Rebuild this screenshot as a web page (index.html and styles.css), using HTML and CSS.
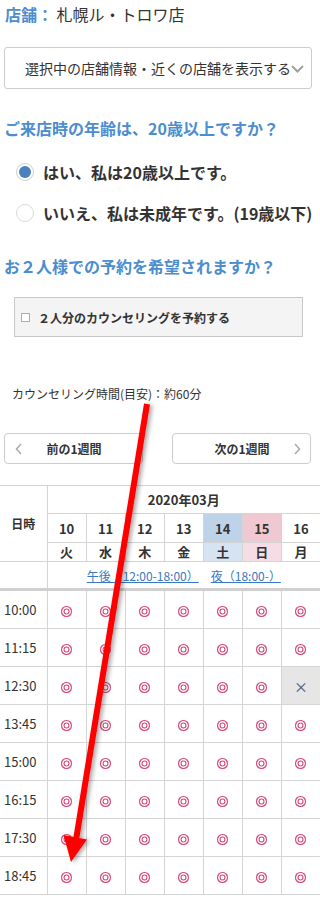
FILE: index.html
```html
<!DOCTYPE html>
<html lang="ja">
<head>
<meta charset="utf-8">
<title>予約</title>
<link rel="stylesheet" href="styles.css">
</head>
<body>
<div class="page">
  <p class="store"><span class="store-label">店舗：</span> 札幌ル・トロワ店</p>
  <div class="select">
    <span class="select-text">選択中の店舗情報・近くの店舗を表示する</span>
    <svg class="select-chev" width="13" height="8" viewBox="0 0 13 8"><polyline points="1,1 6.5,6.5 12,1" fill="none" stroke="#a0a0a0" stroke-width="2"/></svg>
  </div>

  <h2 class="q q-age">ご来店時の年齢は、20歳以上ですか？</h2>
  <ul class="radios">
    <li class="radio-row"><span class="radio radio-on"></span><span>はい、私は20歳以上です。</span></li>
    <li class="radio-row"><span class="radio"></span><span>いいえ、私は未成年です。(19歳以下)</span></li>
  </ul>

  <h2 class="q q-pair">お２人様での予約を希望されますか？</h2>
  <div class="pair-box"><span class="check"></span><span>２人分のカウンセリングを予約する</span></div>

  <p class="duration">カウンセリング時間(目安)：約60分</p>

  <div class="week-nav">
    <div class="week-btn">
      <svg class="chev chev-l" width="7" height="12" viewBox="0 0 7 12"><polyline points="6,1 1.5,6 6,11" fill="none" stroke="#aaa" stroke-width="1.5"/></svg>
      <span class="week-label">前の1週間</span>
      <span></span>
    </div>
    <div class="week-btn">
      <span></span>
      <span class="week-label">次の1週間</span>
      <svg class="chev chev-r" width="7" height="12" viewBox="0 0 7 12"><polyline points="1,1 5.5,6 1,11" fill="none" stroke="#aaa" stroke-width="1.5"/></svg>
    </div>
  </div>

  <table class="cal">
    <colgroup><col class="c-time"><col class="c-day"><col class="c-day"><col class="c-day"><col class="c-day"><col class="c-day"><col class="c-day"><col class="c-day"></colgroup>
    <thead>
      <tr class="r-month"><th class="h-date" rowspan="3">日時</th><th colspan="7">2020年03月</th></tr>
      <tr class="r-num"><th>10</th><th>11</th><th>12</th><th>13</th><th class="sat">14</th><th class="sun">15</th><th>16</th></tr>
      <tr class="r-wd"><th>火</th><th>水</th><th>木</th><th>金</th><th class="sat">土</th><th class="sun">日</th><th>月</th></tr>
      <tr class="r-range"><th class="first"></th><th colspan="7"><a class="range" href="#">午後（12:00-18:00）</a><a class="range" href="#">夜（18:00-）</a></th></tr>
    </thead>
    <tbody>
      <tr><th class="time">10:00</th><td><span class="ok"></span></td><td><span class="ok"></span></td><td><span class="ok"></span></td><td><span class="ok"></span></td><td><span class="ok"></span></td><td><span class="ok"></span></td><td><span class="ok"></span></td></tr>
      <tr><th class="time">11:15</th><td><span class="ok"></span></td><td><span class="ok"></span></td><td><span class="ok"></span></td><td><span class="ok"></span></td><td><span class="ok"></span></td><td><span class="ok"></span></td><td><span class="ok"></span></td></tr>
      <tr><th class="time">12:30</th><td><span class="ok"></span></td><td><span class="ok"></span></td><td><span class="ok"></span></td><td><span class="ok"></span></td><td><span class="ok"></span></td><td><span class="ok"></span></td><td class="ng">×</td></tr>
      <tr><th class="time">13:45</th><td><span class="ok"></span></td><td><span class="ok"></span></td><td><span class="ok"></span></td><td><span class="ok"></span></td><td><span class="ok"></span></td><td><span class="ok"></span></td><td><span class="ok"></span></td></tr>
      <tr><th class="time">15:00</th><td><span class="ok"></span></td><td><span class="ok"></span></td><td><span class="ok"></span></td><td><span class="ok"></span></td><td><span class="ok"></span></td><td><span class="ok"></span></td><td><span class="ok"></span></td></tr>
      <tr><th class="time">16:15</th><td><span class="ok"></span></td><td><span class="ok"></span></td><td><span class="ok"></span></td><td><span class="ok"></span></td><td><span class="ok"></span></td><td><span class="ok"></span></td><td><span class="ok"></span></td></tr>
      <tr><th class="time">17:30</th><td><span class="ok"></span></td><td><span class="ok"></span></td><td><span class="ok"></span></td><td><span class="ok"></span></td><td><span class="ok"></span></td><td><span class="ok"></span></td><td><span class="ok"></span></td></tr>
      <tr><th class="time">18:45</th><td><span class="ok"></span></td><td><span class="ok"></span></td><td><span class="ok"></span></td><td><span class="ok"></span></td><td><span class="ok"></span></td><td><span class="ok"></span></td><td><span class="ok"></span></td></tr>
    </tbody>
  </table>

  <svg class="arrow" width="320" height="898" viewBox="0 0 320 898">
    <defs>
      <filter id="sh" x="-50%" y="-10%" width="200%" height="120%">
        <feDropShadow dx="2.5" dy="1" stdDeviation="2" flood-color="#000" flood-opacity="0.35"/>
      </filter>
    </defs>
    <g filter="url(#sh)">
      <line x1="147" y1="404" x2="76" y2="840" stroke="#ff0000" stroke-width="6"/>
      <polygon points="71,862 63.5,835 87,839.5" fill="#ff0000"/>
    </g>
  </svg>
</div>
</body>
</html>
```
FILE: styles.css
```css
html, body {
  margin: 0;
  padding: 0;
}
body {
  width: 320px;
  overflow: hidden;
  background: #fff;
  color: #333;
  font-family: "Noto Sans CJK JP", "Noto Sans", sans-serif;
}
.page {
  position: relative;
  padding-bottom: 4px;
}

.store {
  margin: 0;
  padding: 3px 5px 0;
  font-size: 16px;
  line-height: 22px;
  white-space: nowrap;
}
.store-label {
  color: #4b8dcf;
  font-weight: bold;
}

.select {
  margin: 22px 8px 0 4px;
  height: 42px;
  box-sizing: border-box;
  border: 1px solid #ccc;
  border-radius: 3px;
  display: flex;
  align-items: center;
  padding-left: 20px;
  font-size: 14px;
  line-height: 20px;
  white-space: nowrap;
}
.select-chev {
  flex: none;
  margin-top: 2px;
}

.q {
  margin: 28px 0 0;
  padding-left: 4px;
  font-size: 16px;
  line-height: 22px;
  font-weight: bold;
  color: #4b8dcf;
  white-space: nowrap;
}
.q-pair {
  margin-top: 22px;
}

.radios {
  list-style: none;
  margin: 12px 0 0;
  padding: 0 0 0 16px;
}
.radio-row {
  display: flex;
  align-items: center;
  height: 41px;
  gap: 9px;
  font-size: 16px;
  font-weight: bold;
  white-space: nowrap;
}
.radio {
  flex: none;
  width: 18px;
  height: 18px;
  box-sizing: border-box;
  border: 1px solid #dadada;
  border-radius: 50%;
  background: #fff;
  display: flex;
  align-items: center;
  justify-content: center;
}
.radio-on {
  border-color: #cfcfcf;
}
.radio-on::after {
  content: "";
  width: 12px;
  height: 12px;
  border-radius: 50%;
  background: #4a7fc0;
}

.pair-box {
  margin: 20px 0 0 14px;
  width: 289px;
  height: 40px;
  box-sizing: border-box;
  border: 1px solid #c8c8c8;
  background: #f4f4f4;
  display: flex;
  align-items: center;
  padding-left: 6px;
  gap: 8px;
  font-size: 12px;
  font-weight: bold;
  white-space: nowrap;
}
.check {
  flex: none;
  width: 7px;
  height: 7px;
  border: 1px solid #a9acb8;
  background: #fff;
}

.duration {
  margin: 48px 0 0;
  padding-left: 12px;
  font-size: 12px;
  line-height: 18px;
  white-space: nowrap;
}

.week-nav {
  margin-top: 30px;
  display: flex;
  justify-content: space-between;
  padding: 0 9px 0 4px;
}
.week-btn {
  width: 139px;
  height: 31px;
  box-sizing: border-box;
  border: 1px solid #ccc;
  border-radius: 4px;
  display: grid;
  grid-template-columns: 1fr auto 1fr;
  align-items: center;
  padding: 0 9px 0 10px;
  font-size: 12px;
  font-weight: bold;
  white-space: nowrap;
}
.chev-l {
  justify-self: start;
}
.chev-r {
  justify-self: end;
}

.cal {
  margin-top: 21px;
  border-collapse: collapse;
  table-layout: fixed;
  width: 321px;
  font-size: 13px;
}
.c-time {
  width: 47px;
}
.c-day {
  width: 39px;
}
.cal th,
.cal td {
  border: 1px solid #d4d4d4;
  padding: 0;
  text-align: center;
  vertical-align: middle;
  font-weight: bold;
}
.cal tr > :first-child {
  border-left: none;
}
.r-month th {
  height: 27px;
}
.h-date {
  font-size: 12px;
}
.r-num th {
  height: 28px;
}
.r-wd th {
  height: 18px;
  line-height: 18px;
}
.r-num .sat {
  background: #bed2e8;
}
.r-wd .sat {
  background: #d6e4f2;
}
.r-num .sun {
  background: #f0c8d1;
}
.r-wd .sun {
  background: #f6dde5;
}
.r-range th {
  height: 26px;
  border-bottom: 3px solid #d0d0d0;
}
.range {
  color: #3a78bf;
  font-size: 12px;
  font-weight: normal;
  text-decoration: underline;
}
.range + .range {
  margin-left: 12px;
}

.cal tbody th,
.cal tbody td {
  height: 37px;
}
.cal .time {
  text-align: left;
  padding-left: 4px;
  font-weight: normal;
  color: #333;
}
.ok {
  display: inline-block;
  vertical-align: middle;
  width: 11px;
  height: 11px;
  border-radius: 50%;
  background: #fff;
  box-shadow: inset 0 0 0 1.1px #d4497b, inset 0 0 0 2.5px #fff, inset 0 0 0 3.6px #d4497b;
}
.ng {
  background: #e6e6e6;
  color: #555;
  font-weight: normal !important;
  font-size: 14px;
}

.arrow {
  position: absolute;
  left: 0;
  top: 0;
  pointer-events: none;
}
```
